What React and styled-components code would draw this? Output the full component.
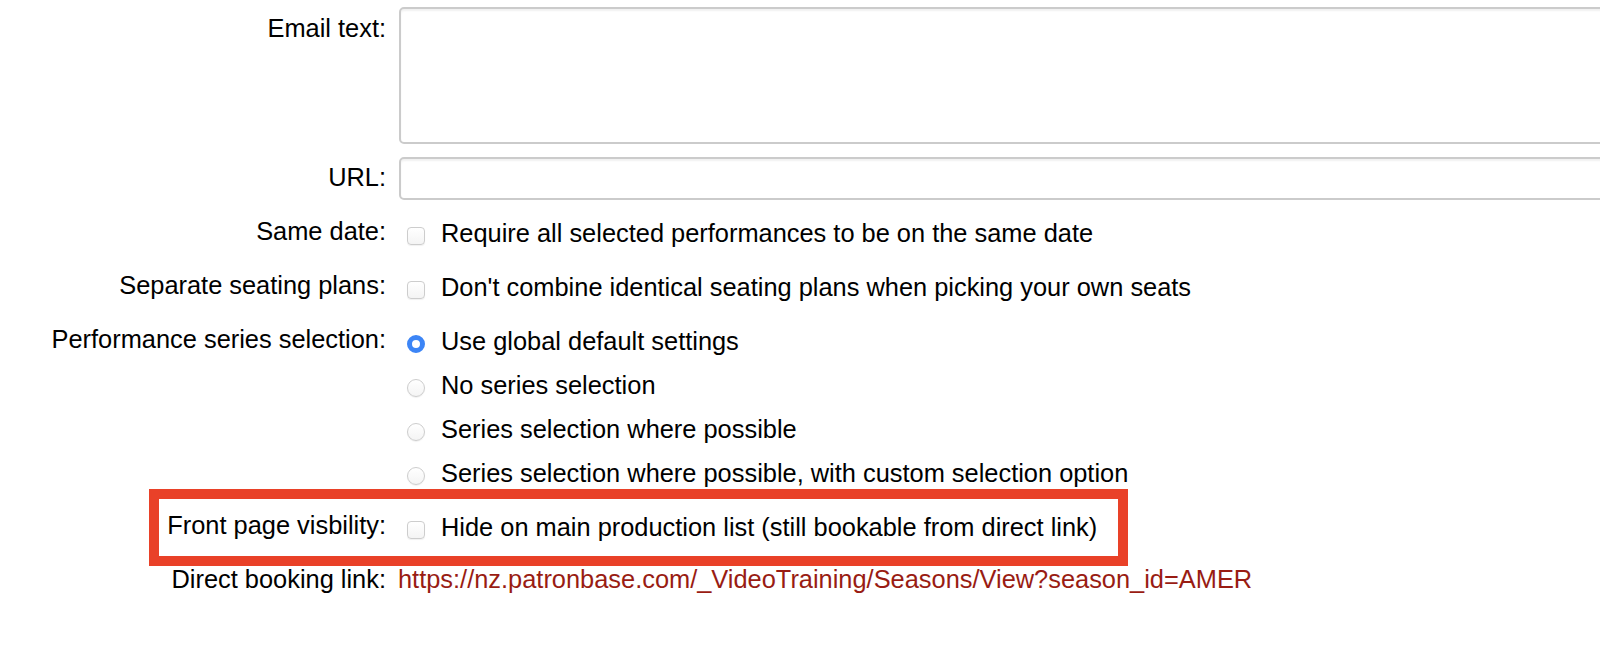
import React from "react";
import styled, { createGlobalStyle } from "styled-components";

const GlobalStyle = createGlobalStyle`
  html, body {
    margin: 0;
    padding: 0;
    background: #fff;
    overflow: hidden;
  }
  body {
    font-family: "Liberation Sans", Arial, Helvetica, sans-serif;
    font-size: 25.4px;
    line-height: 29px;
    color: #000;
  }
`;

const seriesOptions = [
  "Use global default settings",
  "No series selection",
  "Series selection where possible",
  "Series selection where possible, with custom selection option",
];

export default function App() {
  return (
    <>
      <GlobalStyle />
      <SForm>
        <SFieldRow>
          <SLabel $top>Email text:</SLabel>
          <SFieldClip>
            <STextArea />
          </SFieldClip>
        </SFieldRow>
        <SFieldRow $gap={13}>
          <SLabel>URL:</SLabel>
          <SFieldClip>
            <STextInput type="text" />
          </SFieldClip>
        </SFieldRow>

        <SOptionRow $first>
          <SLabel>Same date:</SLabel>
          <SOption>
            <SCheck type="checkbox" />
            <span>Require all selected performances to be on the same date</span>
          </SOption>
        </SOptionRow>

        <SOptionRow>
          <SLabel>Separate seating plans:</SLabel>
          <SOption>
            <SCheck type="checkbox" />
            <span>Don't combine identical seating plans when picking your own seats</span>
          </SOption>
        </SOptionRow>

        <SOptionRow>
          <SLabel>Performance series selection:</SLabel>
          <SOptionList>
            {seriesOptions.map((text, i) => (
              <SOption key={text}>
                <SRadio type="radio" name="series" defaultChecked={i === 0} />
                <span>{text}</span>
              </SOption>
            ))}
          </SOptionList>
        </SOptionRow>

        <SOptionRow>
          <SHighlight />
          <SLabel>Front page visbility:</SLabel>
          <SOption>
            <SCheck type="checkbox" />
            <span>Hide on main production list (still bookable from direct link)</span>
          </SOption>
        </SOptionRow>

        <SOptionRow>
          <SLabel>Direct booking link:</SLabel>
          <SLink href="#">
            https://nz.patronbase.com/_VideoTraining/Seasons/View?season_id=AMER
          </SLink>
        </SOptionRow>
      </SForm>
    </>
  );
}

const SForm = styled.form`
  display: flex;
  flex-direction: column;
  padding-top: 7px;
`;

const SFieldRow = styled.div`
  display: grid;
  grid-template-columns: 386px minmax(0, 1fr);
  column-gap: 13px;
  align-items: center;
  margin-top: ${(p) => p.$gap || 0}px;
`;

const SFieldClip = styled.div`
  overflow: hidden;
  min-width: 0;
`;

const SOptionRow = styled.div`
  position: relative;
  display: grid;
  grid-template-columns: 386px minmax(0, 1fr);
  column-gap: 13px;
  align-items: start;
  padding: 12.5px 0;
  margin-top: ${(p) => (p.$first ? 6 : 0)}px;
`;

const SLabel = styled.label`
  text-align: right;
  white-space: nowrap;
  align-self: ${(p) => (p.$top ? "start" : "auto")};
  padding-top: ${(p) => (p.$top ? 7 : 0)}px;
  margin-top: ${(p) => (p.$top ? 0 : -2)}px;
`;

const fieldBorder = `
  border: 2px solid #cbcbcb;
  border-radius: 5px;
  box-shadow: inset 0 2px 2px rgba(0, 0, 0, 0.06);
  background: #fff;
  box-sizing: border-box;
  font: inherit;
  outline: none;
`;

const STextArea = styled.textarea`
  ${fieldBorder}
  width: calc(100% + 20px);
  height: 137px;
  resize: none;
  display: block;
`;

const STextInput = styled.input`
  ${fieldBorder}
  width: calc(100% + 20px);
  height: 43px;
  display: block;
`;

const SOptionList = styled.div`
  display: flex;
  flex-direction: column;
  gap: 15px;
`;

const SOption = styled.div`
  display: flex;
  align-items: flex-start;
  gap: 16px;
  padding-left: 8px;
  white-space: nowrap;
`;

const boxBase = `
  appearance: none;
  -webkit-appearance: none;
  flex: none;
  width: 18px;
  height: 18px;
  margin: 8px 0 0;
  box-sizing: border-box;
  border: 1px solid #cdcdcd;
  background: linear-gradient(#ffffff, #f4f4f4);
  box-shadow: 0 1px 1px rgba(0, 0, 0, 0.06);
`;

const SCheck = styled.input`
  ${boxBase}
  border-radius: 4px;
`;

const SRadio = styled.input`
  ${boxBase}
  border-radius: 50%;

  &:checked {
    border: 5.5px solid #3c85f6;
    background: #fff;
    box-shadow: none;
  }
`;

const SLink = styled.a`
  color: #991c13;
  text-decoration: none;
  margin-left: -1px;
  margin-top: -2px;
  white-space: nowrap;
`;

const SHighlight = styled.div`
  position: absolute;
  left: 149px;
  top: -11px;
  width: 979px;
  height: 77px;
  box-sizing: border-box;
  border: 10px solid #e94128;
  pointer-events: none;
`;
